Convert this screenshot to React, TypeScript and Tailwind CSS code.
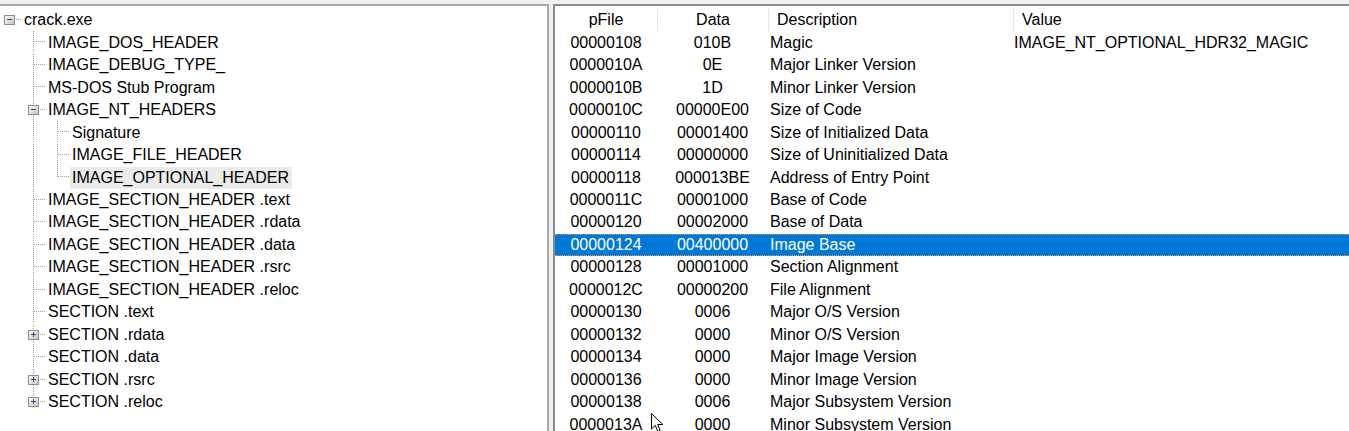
import React from 'react';

type Cell = 'blank' | 'pipe' | 'tee' | 'elbow' | 'root';

type TreeRow = {
  label: string;
  cells: Cell[];
  expander?: 'plus' | 'minus';
  hover?: boolean;
};

const l1 = (label: string, expander?: 'plus' | 'minus', last = false): TreeRow => ({
  label,
  cells: ['blank', last ? 'elbow' : 'tee'],
  expander,
});

const l2 = (label: string, last = false, hover = false): TreeRow => ({
  label,
  cells: ['blank', 'pipe', last ? 'elbow' : 'tee'],
  hover,
});

const tree: TreeRow[] = [
  { label: 'crack.exe', cells: ['root'], expander: 'minus' },
  l1('IMAGE_DOS_HEADER'),
  l1('IMAGE_DEBUG_TYPE_'),
  l1('MS-DOS Stub Program'),
  l1('IMAGE_NT_HEADERS', 'minus'),
  l2('Signature'),
  l2('IMAGE_FILE_HEADER'),
  l2('IMAGE_OPTIONAL_HEADER', true, true),
  l1('IMAGE_SECTION_HEADER .text'),
  l1('IMAGE_SECTION_HEADER .rdata'),
  l1('IMAGE_SECTION_HEADER .data'),
  l1('IMAGE_SECTION_HEADER .rsrc'),
  l1('IMAGE_SECTION_HEADER .reloc'),
  l1('SECTION .text'),
  l1('SECTION .rdata', 'plus'),
  l1('SECTION .data'),
  l1('SECTION .rsrc', 'plus'),
  l1('SECTION .reloc', 'plus', true),
];

const rows: [string, string, string, string?][] = [
  ['00000108', '010B', 'Magic', 'IMAGE_NT_OPTIONAL_HDR32_MAGIC'],
  ['0000010A', '0E', 'Major Linker Version'],
  ['0000010B', '1D', 'Minor Linker Version'],
  ['0000010C', '00000E00', 'Size of Code'],
  ['00000110', '00001400', 'Size of Initialized Data'],
  ['00000114', '00000000', 'Size of Uninitialized Data'],
  ['00000118', '000013BE', 'Address of Entry Point'],
  ['0000011C', '00001000', 'Base of Code'],
  ['00000120', '00002000', 'Base of Data'],
  ['00000124', '00400000', 'Image Base'],
  ['00000128', '00001000', 'Section Alignment'],
  ['0000012C', '00000200', 'File Alignment'],
  ['00000130', '0006', 'Major O/S Version'],
  ['00000132', '0000', 'Minor O/S Version'],
  ['00000134', '0000', 'Major Image Version'],
  ['00000136', '0000', 'Minor Image Version'],
  ['00000138', '0006', 'Major Subsystem Version'],
  ['0000013A', '0000', 'Minor Subsystem Version'],
];

const LINE = '#a0a0a0';
const H = 22.47;

function Connector({ type, expander }: { type: Cell; expander?: 'plus' | 'minus' }) {
  const mid = Math.round(H / 2) - 0.5;
  return (
    <svg width="24" height={H} className="shrink-0 block" shapeRendering="crispEdges">
      {(type === 'pipe' || type === 'tee') && (
        <line x1="9.5" y1="0" x2="9.5" y2={H} stroke={LINE} strokeDasharray="1 1" />
      )}
      {type === 'elbow' && <line x1="9.5" y1="0" x2="9.5" y2={mid} stroke={LINE} strokeDasharray="1 1" />}
      {(type === 'tee' || type === 'elbow' || type === 'root') && (
        <line x1="10" y1={mid} x2="22" y2={mid} stroke={LINE} strokeDasharray="1 1" />
      )}
      {expander && (
        <g>
          <defs>
            <linearGradient id="exp" x1="0" y1="0" x2="1" y2="1">
              <stop offset="0" stopColor="#ffffff" />
              <stop offset="1" stopColor="#c4c4c4" />
            </linearGradient>
          </defs>
          <rect x="4.5" y={mid - 4.5} width="10" height="9" fill="url(#exp)" stroke="#8e8f8f" />
          <line x1="7" y1={mid} x2="12" y2={mid} stroke="#2c4a7a" />
          {expander === 'plus' && <line x1="9.5" y1={mid - 2.5} x2="9.5" y2={mid + 2.5} stroke="#2c4a7a" />}
        </g>
      )}
    </svg>
  );
}

function Cursor() {
  return (
    <svg width="13" height="20" viewBox="0 0 13 20" className="absolute left-[651px] top-[413px]">
      <path d="M0.5 0.5 L0.5 16 L4.3 12.3 L6.8 18.6 L9.2 17.6 L6.7 11.5 L11.8 11.5 Z" fill="#fff" stroke="#000" strokeWidth="1" />
    </svg>
  );
}

export default function App() {
  return (
    <div
      className="relative h-[431px] w-[1349px] overflow-hidden bg-[#f0f0f0] pt-[4px] flex gap-[4px] text-[16px] text-black"
      style={{ fontFamily: '"Liberation Sans", Arial, sans-serif' }}
    >
      <div className="w-[549px] shrink-0 bg-white border-t-2 border-r-2 border-[#a8a8a8] pt-[3px]">
        {tree.map((r) => (
          <div key={r.label} className="flex items-center h-[22.47px] whitespace-nowrap">
            {r.cells.map((c, i) => (
              <Connector key={i} type={c} expander={i === r.cells.length - 1 ? r.expander : undefined} />
            ))}
            <span className={`-ml-[2px] pl-[2px] pr-[3px] leading-[22px] ${r.hover ? 'bg-[#ebebeb]' : ''}`}>
              {r.label}
            </span>
          </div>
        ))}
      </div>

      <div className="flex-1 bg-white border-t-2 border-l-2 border-[#8c8c8c] pt-[3px]">
        <div className="flex h-[22.47px] items-center whitespace-nowrap">
          <div className="w-[102px] text-center">pFile</div>
          <div className="w-[111px] h-full flex items-center justify-center border-l border-[#e5e5e5]">Data</div>
          <div className="w-[245px] h-full flex items-center pl-[8px] border-l border-[#e5e5e5]">Description</div>
          <div className="flex-1 h-full flex items-center pl-[8px] border-l border-[#e5e5e5]">Value</div>
        </div>
        {rows.map(([off, data, desc, val]) => {
          const sel = off === '00000124';
          return (
            <div
              key={off}
              className={`flex h-[22.47px] items-center whitespace-nowrap ${
                sel ? 'bg-[#0078d7] text-white border-y border-dotted border-[#e0904a]' : ''
              }`}
            >
              <div className="w-[102px] text-center">{off}</div>
              <div className="w-[111px] text-center">{data}</div>
              <div className="w-[245px] pl-[2px]">{desc}</div>
              <div className="flex-1 pl-[1px]">{val}</div>
            </div>
          );
        })}
      </div>

      <Cursor />
    </div>
  );
}
